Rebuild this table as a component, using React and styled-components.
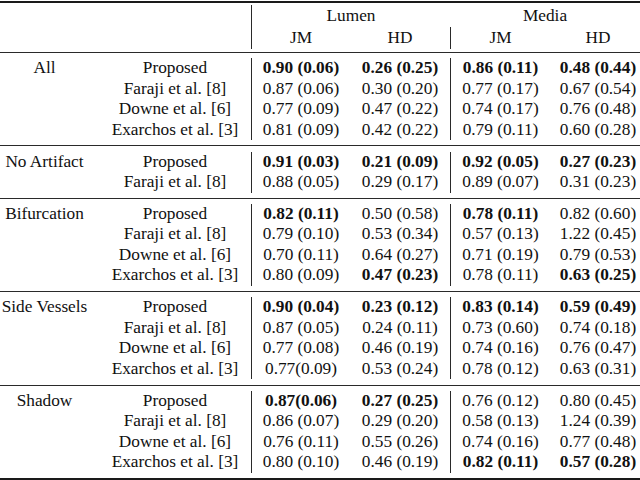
import React from 'react';
import styled, { createGlobalStyle } from 'styled-components';

const GlobalStyle = createGlobalStyle`
  html, body { margin: 0; padding: 0; background: #ffffff; }
  body {
    font-family: "Liberation Serif", "Times New Roman", serif;
    color: #111111;
    -webkit-font-smoothing: antialiased;
  }
`;

const Page = styled.div`
  width: 640px;
  height: 480px;
  padding-top: 1px;
  box-sizing: border-box;
  overflow: hidden;
`;

const Table = styled.div`
  width: 640px;
  border-top: 2px solid #1a1a1a;
  border-bottom: 2px solid #1a1a1a;
  font-size: 17.3px;
`;

const COLS = '89px 162px 99px 100px 100px 90px';

const Header = styled.div`
  display: grid;
  grid-template-columns: ${COLS};
  grid-auto-rows: 22px;
  padding: 2px 0 3px;
  border-bottom: 1px solid #2a2a2a;
  line-height: 22px;
`;

const Block = styled.div`
  display: grid;
  grid-template-columns: ${COLS};
  grid-auto-rows: 20.5px;
  padding: 5.2px 0;
  line-height: 20.5px;
  & + & {
    border-top: 1px solid #2a2a2a;
  }
`;

const Cell = styled.div`
  text-align: center;
  white-space: nowrap;
  font-weight: ${(p) => (p.$bold ? 700 : 400)};
  grid-column: ${(p) => p.$span || 'auto'};
  padding-left: ${(p) => (p.$col === 2 ? '10px' : p.$col === 6 ? '6px' : '0')};
  border-left: ${(p) => (p.$divider ? '1px solid #2a2a2a' : 'none')};
`;

const groups = [
  {
    name: 'All',
    rows: [
      ['Proposed', '*0.90 (0.06)', '*0.26 (0.25)', '*0.86 (0.11)', '*0.48 (0.44)'],
      ['Faraji et al. [8]', '0.87 (0.06)', '0.30 (0.20)', '0.77 (0.17)', '0.67 (0.54)'],
      ['Downe et al. [6]', '0.77 (0.09)', '0.47 (0.22)', '0.74 (0.17)', '0.76 (0.48)'],
      ['Exarchos et al. [3]', '0.81 (0.09)', '0.42 (0.22)', '0.79 (0.11)', '0.60 (0.28)'],
    ],
  },
  {
    name: 'No Artifact',
    rows: [
      ['Proposed', '*0.91 (0.03)', '*0.21 (0.09)', '*0.92 (0.05)', '*0.27 (0.23)'],
      ['Faraji et al. [8]', '0.88 (0.05)', '0.29 (0.17)', '0.89 (0.07)', '0.31 (0.23)'],
    ],
  },
  {
    name: 'Bifurcation',
    rows: [
      ['Proposed', '*0.82 (0.11)', '0.50 (0.58)', '*0.78 (0.11)', '0.82 (0.60)'],
      ['Faraji et al. [8]', '0.79 (0.10)', '0.53 (0.34)', '0.57 (0.13)', '1.22 (0.45)'],
      ['Downe et al. [6]', '0.70 (0.11)', '0.64 (0.27)', '0.71 (0.19)', '0.79 (0.53)'],
      ['Exarchos et al. [3]', '0.80 (0.09)', '*0.47 (0.23)', '0.78 (0.11)', '*0.63 (0.25)'],
    ],
  },
  {
    name: 'Side Vessels',
    rows: [
      ['Proposed', '*0.90 (0.04)', '*0.23 (0.12)', '*0.83 (0.14)', '*0.59 (0.49)'],
      ['Faraji et al. [8]', '0.87 (0.05)', '0.24 (0.11)', '0.73 (0.60)', '0.74 (0.18)'],
      ['Downe et al. [6]', '0.77 (0.08)', '0.46 (0.19)', '0.74 (0.16)', '0.76 (0.47)'],
      ['Exarchos et al. [3]', '0.77(0.09)', '0.53 (0.24)', '0.78 (0.12)', '0.63 (0.31)'],
    ],
  },
  {
    name: 'Shadow',
    rows: [
      ['Proposed', '*0.87(0.06)', '*0.27 (0.25)', '0.76 (0.12)', '0.80 (0.45)'],
      ['Faraji et al. [8]', '0.86 (0.07)', '0.29 (0.20)', '0.58 (0.13)', '1.24 (0.39)'],
      ['Downe et al. [6]', '0.76 (0.11)', '0.55 (0.26)', '0.74 (0.16)', '0.77 (0.48)'],
      ['Exarchos et al. [3]', '0.80 (0.10)', '0.46 (0.19)', '*0.82 (0.11)', '*0.57 (0.28)'],
    ],
  },
];

function Value({ text, col }) {
  const bold = text.startsWith('*');
  return (
    <Cell $col={col} $bold={bold} $divider={col === 3 || col === 5}>
      {bold ? text.slice(1) : text}
    </Cell>
  );
}

export default function App() {
  return (
    <>
      <GlobalStyle />
      <Page>
        <Table>
          <Header>
            <Cell $col={1} />
            <Cell $col={2} />
            <Cell $span="span 2" $divider>Lumen</Cell>
            <Cell $span="span 2">Media</Cell>
            <Cell $col={1} />
            <Cell $col={2} />
            <Cell $col={3} $divider>JM</Cell>
            <Cell $col={4}>HD</Cell>
            <Cell $col={5} $divider>JM</Cell>
            <Cell $col={6}>HD</Cell>
          </Header>
          {groups.map((g) => (
            <Block key={g.name}>
              {g.rows.map((r, i) => (
                <React.Fragment key={i}>
                  <Cell $col={1}>{i === 0 ? g.name : ''}</Cell>
                  <Cell $col={2}>{r[0]}</Cell>
                  {r.slice(1).map((v, j) => (
                    <Value key={j} text={v} col={j + 3} />
                  ))}
                </React.Fragment>
              ))}
            </Block>
          ))}
        </Table>
      </Page>
    </>
  );
}
